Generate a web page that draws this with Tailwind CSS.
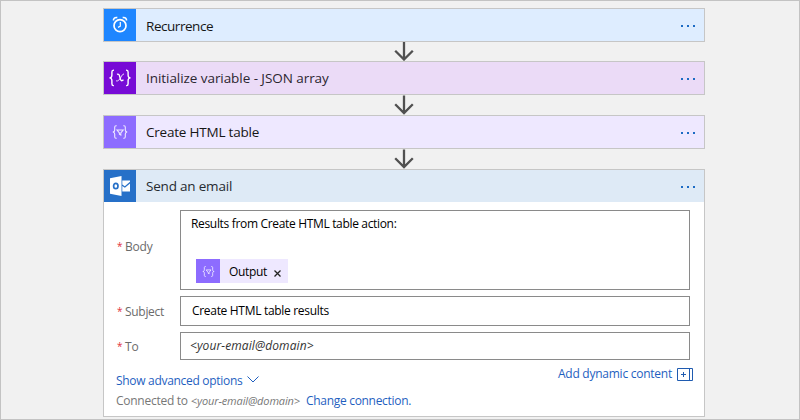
<!DOCTYPE html>
<html lang="en">
<head>
<meta charset="utf-8">
<title>Workflow designer</title>
<script src="https://cdn.jsdelivr.net/npm/@tailwindcss/browser@4"></script>
</head>
<body class="w-[800px] h-[420px] overflow-hidden font-['Open_Sans','Noto_Sans',sans-serif]">
<svg class="hidden">
  <symbol id="arrow" viewBox="0 0 20 19"><path d="M10 0v17.500M1.200 8.700l8.800 8.800 8.800-8.800" fill="none" stroke="#505050" stroke-width="2.300"/></symbol>
  <symbol id="dots" viewBox="0 0 14 2"><path d="M0 0h2v2H0zM6 0h2v2H6zM12 0h2v2h-2z" fill="#1c6bc4"/></symbol>
  <symbol id="braces" viewBox="0 0 16 14"><g fill="none" stroke="#fff" stroke-opacity=".85" stroke-width="1.1"><path d="M4.700.7H4C2.900.7 2.700 1.200 2.700 2.200v2.700c0 1.300-.5 2-1.900 2.100 1.400.1 1.900.8 1.900 2.100v2.700c0 1 .2 1.500 1.300 1.500h.7M11.300.7H12c1.100 0 1.300.5 1.300 1.500v2.700c0 1.300.5 2 1.900 2.100-1.400.1-1.900.8-1.900 2.100v2.700c0 1-.2 1.500-1.300 1.500h-.7"/><path d="M5 5h6.200L8.800 8v2l-1.400-.9V8z"/></g></symbol>
</svg>
<main class="w-[800px] h-[420px] border border-[#c3c3c3] bg-[#f1f1f1] pt-[7px] pl-[102px] flex flex-col items-start">
  <section class="w-[602px] h-[34px] shrink-0 border border-[#c6c6c6] bg-[#deedff] flex items-center">
    <div class="size-8 bg-[#1e86ff] flex items-center justify-center">
      <svg class="w-4 h-[18px]" viewBox="0 0 16 18" fill="none" stroke="#fff"><circle cx="8" cy="9.700" r="6" stroke-width="1.700"/><path d="M8.300 6v4.200l-2.300 1.200" stroke-width="1.200"/><path d="M1.500 4.500C1.200 2.500 2.900 1 5.300 1.600M14.500 4.500C14.800 2.500 13.100 1 10.700 1.600" stroke-width="1.600"/></svg>
    </div>
    <span class="ml-[10px] mt-[3px] text-[13.5px] tracking-[-0.45px] text-[#161616] whitespace-nowrap">Recurrence</span>
    <svg class="w-[14px] h-[2px] ml-auto mr-[9px] mt-[2px]"><use href="#dots"/></svg>
  </section>
  <svg class="w-5 h-[19px] ml-[291px] shrink-0"><use href="#arrow"/></svg>
  <section class="w-[602px] h-[34px] shrink-0 border border-[#c6c6c6] bg-[#ebdbf7] flex items-center">
    <div class="size-8 bg-[#770bd6] flex items-center justify-center">
      <svg class="w-6 h-[18px]" viewBox="0 0 24 18" fill="none" stroke="#fff" stroke-width="1.400"><path d="M5.900 1.200h-.5C4.200 1.200 3.900 2 3.900 3v3.200c0 1.500-.5 2.500-2.400 2.700 1.900.2 2.400 1.200 2.400 2.700v3.200c0 1 .3 1.800 1.500 1.800h.5M18.100 1.200h.5c1.200 0 1.500.8 1.500 1.800v3.200c0 1.500.5 2.500 2.400 2.700-1.900.2-2.400 1.200-2.400 2.700v3.200c0 1-.3 1.800-1.500 1.800h-.5"/><path d="M9 5.300c2.300-.9 2.500 1.800 3.100 3.700.6 2.300 1.200 3.800 3.400 1.800" stroke-width="1.300"/><path d="M16 5c-2.500-.5-3.800 8-7.900 6.900" stroke-width=".9"/></svg>
    </div>
    <span class="ml-[10px] mt-px text-[13.5px] tracking-[-0.06px] text-[#2b2630] whitespace-nowrap">Initialize variable - JSON array</span>
    <svg class="w-[14px] h-[2px] ml-auto mr-[9px] mt-[2px]"><use href="#dots"/></svg>
  </section>
  <svg class="w-5 h-5 ml-[291px] shrink-0"><use href="#arrow"/></svg>
  <section class="w-[602px] h-[34px] shrink-0 border border-[#c6c6c6] bg-[#eee8ff] flex items-center">
    <div class="size-8 bg-[#8d6cff] flex items-center justify-center"><svg class="w-4 h-[14px]"><use href="#braces"/></svg></div>
    <span class="ml-[10px] mt-px text-[13.5px] tracking-[-0.21px] text-[#161616] whitespace-nowrap">Create HTML table</span>
    <svg class="w-[14px] h-[2px] ml-auto mr-[9px] mt-[2px]"><use href="#dots"/></svg>
  </section>
  <svg class="w-5 h-5 ml-[291px] shrink-0"><use href="#arrow"/></svg>
  <section class="w-[602px] h-[248px] shrink-0 border border-[#c6c6c6] bg-white flex flex-col">
    <header class="h-8 shrink-0 bg-[#deeaf6] flex items-center">
      <div class="size-8 bg-[#2670c8] flex items-center justify-center">
        <svg class="w-5 h-5" viewBox="0 0 20 20"><path d="M0 2.300L11.500 0v20L0 17.700z" fill="#fff"/><ellipse cx="5.800" cy="10" rx="2.200" ry="2.700" fill="none" stroke="#2670c8" stroke-width="1.700"/><path d="M12.300 4.500H20v1.300l-5.200 4.400-2.500-1.700z" fill="#fff"/><path d="M12.300 10l2.600 1.700L20 7.400v8.100h-7.700z" fill="#fff"/></svg>
      </div>
      <span class="ml-[10px] mt-px text-[13.5px] tracking-[-0.2px] text-[#262b30] whitespace-nowrap">Send an email</span>
      <svg class="w-[14px] h-[2px] ml-auto mr-[9px] mt-[2px]"><use href="#dots"/></svg>
    </header>
    <div class="grid grid-cols-[63px_510px] gap-y-[6px] pl-[13px] pt-2 text-[12px] tracking-[-0.2px] text-[#6b6b6b]">
      <div class="h-20 flex items-center gap-[2px] pb-[6px]"><span class="text-[#e0303c] text-[10px] w-[6px] -mt-[2px]">*</span><span>Body</span></div>
      <div class="h-20 border border-[#8a8a8a] text-black pl-[10px] pt-[4px]">
        <p class="h-[18px] leading-[18px] tracking-[-0.33px] whitespace-nowrap">Results from Create HTML table action:</p>
        <div class="mt-[26px] ml-[5px] w-[92px] h-6 bg-[#eee8ff] flex items-center">
          <div class="size-6 bg-[#8d6cff] flex items-center justify-center"><svg class="w-[13px] h-[11px]" viewBox="0 0 16 14"><use href="#braces" width="16" height="14"/></svg></div>
          <span class="ml-[9px] mt-px w-[45px] tracking-[-0.33px]">Output</span>
          <svg class="size-[7px] mt-1" viewBox="0 0 7 7"><path d="M.5.5l6 6M6.500.5l-6 6" stroke="#222" stroke-width="1.300"/></svg>
        </div>
      </div>
      <div class="h-[30px] flex items-center gap-[2px] pt-[2px]"><span class="text-[#e0303c] text-[10px] w-[6px] -mt-[2px]">*</span><span class="tracking-[-0.3px]">Subject</span></div>
      <div class="h-[30px] border border-[#8a8a8a] text-black pl-[11px] leading-[28px] tracking-[-0.31px]">Create HTML table results</div>
      <div class="h-7 flex items-center gap-[2px] pt-[2px]"><span class="text-[#e0303c] text-[10px] w-[6px] -mt-[2px]">*</span><span>To</span></div>
      <div class="h-7 border border-[#8a8a8a] text-[#333] italic pl-[9px] leading-[26px] tracking-[0.1px]">&lt;your-email@domain&gt;</div>
    </div>
    <div class="flex justify-between pl-3 pr-[11px] pt-1 text-[12px] tracking-[-0.2px] text-[#1f5fbf] whitespace-nowrap">
      <div>
        <div class="h-5 mt-[7px] leading-5 flex items-center gap-[5px]"><span class="tracking-[-0.3px]">Show advanced options</span><svg class="w-3 h-[7px] -mt-1" viewBox="0 0 12 7"><path d="M.5.5L6 6 11.500.5" fill="none" stroke="#1f5fbf"/></svg></div>
        <div class="h-5 leading-5 flex items-center"><span class="text-[#777] tracking-[-0.26px]">Connected to</span><i class="ml-[3px] text-[11px] tracking-[-0.13px] text-[#777]">&lt;your-email@domain&gt;</i><span class="ml-[6px] tracking-[-0.3px]">Change connection.</span></div>
      </div>
      <div class="h-5 flex items-center gap-[5px]"><span class="tracking-[-0.25px]">Add dynamic content</span><svg class="w-4 h-[13px]" viewBox="0 0 16 13" fill="none" stroke="#1f5bb0"><path d="M.5.5h15v12H.5zM12.500.5v12M4 6.500h5M6.500 4v5"/></svg></div>
    </div>
  </section>
</main>
</body>
</html>
